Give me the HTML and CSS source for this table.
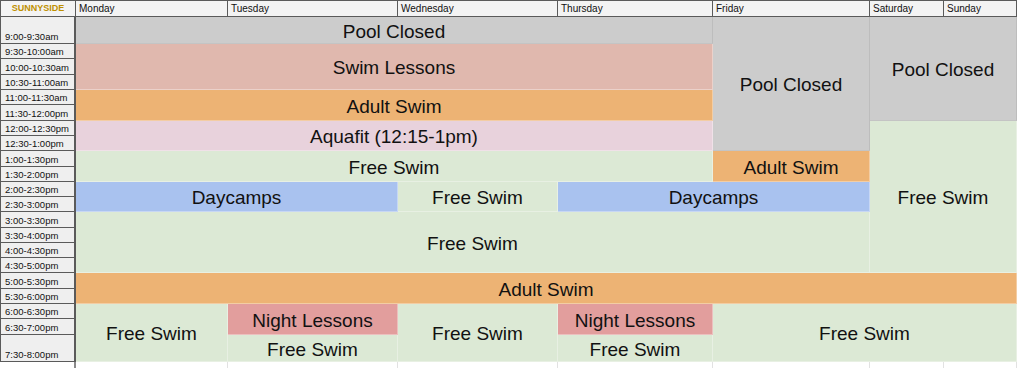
FILE: index.html
```html
<!DOCTYPE html>
<html lang="en">
<head>
<meta charset="utf-8">
<title>Sunnyside Pool Schedule</title>
<link rel="stylesheet" href="styles.css">
</head>
<body>
<div class="sheet">
  <div class="hd corner">SUNNYSIDE</div>
  <div class="hd">Monday</div>
  <div class="hd">Tuesday</div>
  <div class="hd">Wednesday</div>
  <div class="hd">Thursday</div>
  <div class="hd">Friday</div>
  <div class="hd">Saturday</div>
  <div class="hd">Sunday</div>

  <div class="lbl r2">9:00-9:30am</div>
  <div class="lbl r3">9:30-10:00am</div>
  <div class="lbl r4">10:00-10:30am</div>
  <div class="lbl r5">10:30-11:00am</div>
  <div class="lbl r6">11:00-11:30am</div>
  <div class="lbl r7">11:30-12:00pm</div>
  <div class="lbl r8">12:00-12:30pm</div>
  <div class="lbl r9">12:30-1:00pm</div>
  <div class="lbl r10">1:00-1:30pm</div>
  <div class="lbl r11">1:30-2:00pm</div>
  <div class="lbl r12">2:00-2:30pm</div>
  <div class="lbl r13">2:30-3:00pm</div>
  <div class="lbl r14">3:00-3:30pm</div>
  <div class="lbl r15">3:30-4:00pm</div>
  <div class="lbl r16">4:00-4:30pm</div>
  <div class="lbl r17">4:30-5:00pm</div>
  <div class="lbl r18">5:00-5:30pm</div>
  <div class="lbl r19">5:30-6:00pm</div>
  <div class="lbl r20">6:00-6:30pm</div>
  <div class="lbl r21">6:30-7:00pm</div>
  <div class="lbl r22">7:30-8:00pm</div>

  <div class="blk gray wk-closed">Pool Closed</div>
  <div class="blk rose wk-lessons">Swim Lessons</div>
  <div class="blk orange wk-adult">Adult Swim</div>
  <div class="blk pink wk-aqua">Aquafit (12:15-1pm)</div>
  <div class="blk green wk-free1">Free Swim</div>
  <div class="blk gray fri-closed">Pool Closed</div>
  <div class="blk orange fri-adult">Adult Swim</div>
  <div class="blk gray we-closed">Pool Closed</div>
  <div class="blk green we-free">Free Swim</div>
  <div class="blk blue day-a">Daycamps</div>
  <div class="blk green wed-free">Free Swim</div>
  <div class="blk blue day-b">Daycamps</div>
  <div class="blk green wk-free2">Free Swim</div>
  <div class="blk orange all-adult">Adult Swim</div>
  <div class="blk green mon-eve">Free Swim</div>
  <div class="blk red tue-night">Night Lessons</div>
  <div class="blk green tue-free">Free Swim</div>
  <div class="blk green wed-eve">Free Swim</div>
  <div class="blk red thu-night">Night Lessons</div>
  <div class="blk green thu-free">Free Swim</div>
  <div class="blk green end-free">Free Swim</div>

  <div class="ex ex-first"></div>
  <div class="ex"></div>
  <div class="ex"></div>
  <div class="ex"></div>
  <div class="ex"></div>
  <div class="ex"></div>
  <div class="ex"></div>
  <div class="ex"></div>
</div>
</body>
</html>
```

FILE: styles.css
```css
* { box-sizing: border-box; }

html, body {
  margin: 0;
  padding: 0;
  background: #ffffff;
  font-family: "Liberation Sans", Arial, sans-serif;
  color: #111;
  overflow: hidden;
}

.sheet {
  display: grid;
  width: 1017px;
  grid-template-columns: 76px 152px 170px 160px 155px 157px 74px 73px;
  grid-template-rows:
    17px 27px
    15px 16px 15px 15px 16px 15px 15px 16px 15px 15px 15px 16px 15px 15px 15px 16px 15px 15px 16px
    27px 20px;
}

/* header */
.hd {
  grid-row: 1;
  background: #f3f3f3;
  border-top: 1px solid #5a5a5a;
  border-right: 1px solid #5a5a5a;
  border-bottom: 1px solid #5a5a5a;
  font-size: 10px;
  line-height: 15px;
  padding-left: 3px;
  white-space: nowrap;
  overflow: hidden;
}
.corner {
  border-left: 1px solid #5a5a5a;
  color: #bf9000;
  font-weight: bold;
  font-size: 9px;
  text-align: center;
  padding-left: 0;
}

/* time labels */
.lbl {
  grid-column: 1;
  background: #efefef;
  border-left: 1px solid #5a5a5a;
  border-right: 2px solid #5a5a5a;
  border-bottom: 1px solid #5a5a5a;
  font-size: 9.5px;
  padding-left: 4px;
  display: flex;
  align-items: flex-end;
  line-height: 12px;
  padding-bottom: 0;
  white-space: nowrap;
}
.r2 { grid-row: 2; }
.r3 { grid-row: 3; }
.r4 { grid-row: 4; }
.r5 { grid-row: 5; }
.r6 { grid-row: 6; }
.r7 { grid-row: 7; }
.r8 { grid-row: 8; }
.r9 { grid-row: 9; }
.r10 { grid-row: 10; }
.r11 { grid-row: 11; }
.r12 { grid-row: 12; }
.r13 { grid-row: 13; }
.r14 { grid-row: 14; }
.r15 { grid-row: 15; }
.r16 { grid-row: 16; }
.r17 { grid-row: 17; }
.r18 { grid-row: 18; }
.r19 { grid-row: 19; }
.r20 { grid-row: 20; }
.r21 { grid-row: 21; }
.r22 { grid-row: 22; }

/* schedule blocks */
.blk {
  display: flex;
  align-items: center;
  justify-content: center;
  font-size: 19px;
  line-height: 22px;
  padding-top: 3px;
  color: #111;
  white-space: nowrap;
  border-right: 1px solid rgba(255,255,255,0.35);
  border-bottom: 1px solid rgba(255,255,255,0.35);
}
.gray   { background: #cccccc; border-right-color: #bdbdbd; border-bottom-color: #c4c4c4; }
.rose   { background: #e0b8ae; }
.orange { background: #edb374; }
.pink   { background: #e8d2dc; }
.green  { background: #dce9d5; }
.blue   { background: #a9c2ef; }
.red    { background: #e29e9d; }

.wk-closed  { grid-column: 2 / 6; grid-row: 2 / 3; }
.wk-lessons { grid-column: 2 / 6; grid-row: 3 / 6; }
.wk-adult   { grid-column: 2 / 6; grid-row: 6 / 8; }
.wk-aqua    { grid-column: 2 / 6; grid-row: 8 / 10; }
.wk-free1   { grid-column: 2 / 6; grid-row: 10 / 12; }
.fri-closed { grid-column: 6 / 7; grid-row: 2 / 10; }
.fri-adult  { grid-column: 6 / 7; grid-row: 10 / 12; }
.we-closed  { grid-column: 7 / 9; grid-row: 2 / 8; }
.we-free    { grid-column: 7 / 9; grid-row: 8 / 18; }
.day-a      { grid-column: 2 / 4; grid-row: 12 / 14; }
.wed-free   { grid-column: 4 / 5; grid-row: 12 / 14; }
.day-b      { grid-column: 5 / 7; grid-row: 12 / 14; }
.wk-free2   { grid-column: 2 / 7; grid-row: 14 / 18; }
.all-adult  { grid-column: 2 / 9; grid-row: 18 / 20; }
.mon-eve    { grid-column: 2 / 3; grid-row: 20 / 23; }
.tue-night  { grid-column: 3 / 4; grid-row: 20 / 22; }
.tue-free   { grid-column: 3 / 4; grid-row: 22 / 23; }
.wed-eve    { grid-column: 4 / 5; grid-row: 20 / 23; }
.thu-night  { grid-column: 5 / 6; grid-row: 20 / 22; }
.thu-free   { grid-column: 5 / 6; grid-row: 22 / 23; }
.end-free   { grid-column: 6 / 9; grid-row: 20 / 23; }

/* empty trailing row */
.ex {
  grid-row: 23;
  border-right: 1px solid #e2e2e2;
}
.ex-first {
  border-right: 2px solid #8a8a8a;
}
```
